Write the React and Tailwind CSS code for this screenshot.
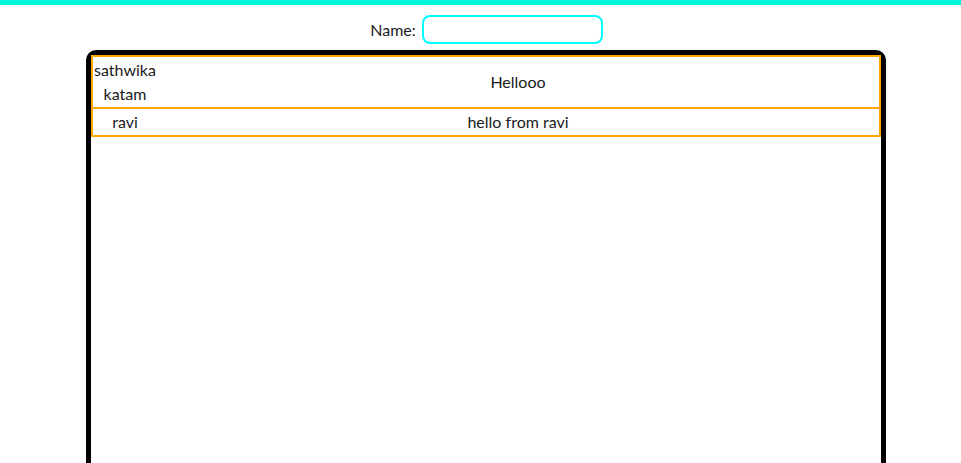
const messages = [
  { name: "sathwika katam", text: "Hellooo" },
  { name: "ravi", text: "hello from ravi" },
];

export default function App() {
  return (
    <div className="min-h-[463px] bg-white text-[#1a1a1a] text-base leading-6 font-['Lato','Noto_Sans',sans-serif]">
      <div className="h-[5px] bg-[#03f5dc]" />

      <div className="pl-[12px] flex flex-col items-center">
        <div className="mt-[10px] flex items-center gap-[6px]">
          <label>Name:</label>
          <input
            type="text"
            className="w-[181px] h-[29px] border-2 border-[#00ffff] rounded-lg px-2 outline-none"
          />
        </div>

        <div className="mt-[6px] -ml-px w-[800px] h-[520px] border-[5px] border-black rounded-[10px]">
          {messages.map((m, i) => (
            <div
              key={i}
              className={`grid grid-cols-[64px_1fr] border-2 border-[#ffa500] ${i > 0 ? "border-t-0" : ""}`}
            >
              <div className="py-px text-center">{m.name}</div>
              <div className="py-px flex items-center justify-center">{m.text}</div>
            </div>
          ))}
        </div>
      </div>
    </div>
  );
}
